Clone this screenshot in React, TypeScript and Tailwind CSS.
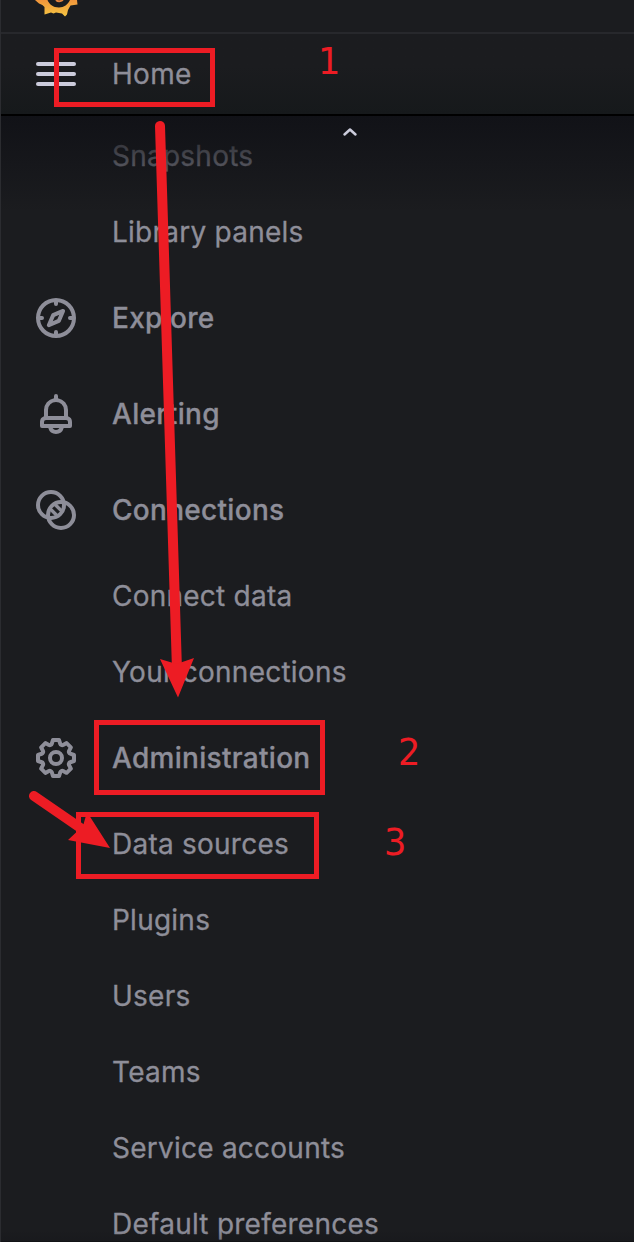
import type { ReactNode } from "react";

const compass =
  "M12,2A10,10,0,1,0,22,12,10,10,0,0,0,12,2Zm1,17.93V19a1,1,0,0,0-2,0v.93A8,8,0,0,1,4.07,13H5a1,1,0,0,0,0-2H4.07A8,8,0,0,1,11,4.07V5a1,1,0,0,0,2,0V4.07A8,8,0,0,1,19.93,11H19a1,1,0,0,0,0,2h.93A8,8,0,0,1,13,19.93ZM15.14,7.55l-5,2.12a1,1,0,0,0-.52.52l-2.12,5a1,1,0,0,0,.21,1.1,1,1,0,0,0,.7.29.93.93,0,0,0,.4-.08l5-2.12a1,1,0,0,0,.52-.52l2.12-5a1,1,0,0,0-1.31-1.31Zm-2.49,5.1-2.28,1,1-2.28,2.28-1Z";
const bell =
  "M18,13.18V10a6,6,0,0,0-5-5.91V3a1,1,0,0,0-2,0V4.09A6,6,0,0,0,6,10v3.18A3,3,0,0,0,4,16v2a1,1,0,0,0,1,1H8.14a4,4,0,0,0,7.72,0H19a1,1,0,0,0,1-1V16A3,3,0,0,0,18,13.18ZM8,10a4,4,0,0,1,8,0v3H8Zm4,10a2,2,0,0,1-1.72-1h3.44A2,2,0,0,1,12,20Zm6-3H6V16a1,1,0,0,1,1-1H17a1,1,0,0,1,1,1Z";
const cog =
  "M21.32,9.55l-1.89-.63.89-1.78A1,1,0,0,0,20.13,6L18,3.87a1,1,0,0,0-1.15-.19l-1.78.89-.63-1.89A1,1,0,0,0,13.5,2h-3a1,1,0,0,0-.95.68L8.92,4.57,7.14,3.68A1,1,0,0,0,6,3.87L3.87,6a1,1,0,0,0-.19,1.15l.89,1.78-1.89.63A1,1,0,0,0,2,10.5v3a1,1,0,0,0,.68.95l1.89.63-.89,1.78A1,1,0,0,0,3.87,18L6,20.13a1,1,0,0,0,1.15.19l1.78-.89.63,1.89a1,1,0,0,0,.95.68h3a1,1,0,0,0,.95-.68l.63-1.89,1.78.89A1,1,0,0,0,18,20.13L20.13,18a1,1,0,0,0,.19-1.15l-.89-1.78,1.89-.63A1,1,0,0,0,22,13.5v-3A1,1,0,0,0,21.32,9.55ZM20,12.78l-1.2.4A2,2,0,0,0,17.64,16l.57,1.14-1.1,1.1L16,17.64a2,2,0,0,0-2.79,1.16l-.4,1.2H11.22l-.4-1.2A2,2,0,0,0,8,17.64l-1.14.57-1.1-1.1L6.36,16A2,2,0,0,0,5.2,13.18L4,12.78V11.22l1.2-.4A2,2,0,0,0,6.36,8L5.79,6.89l1.1-1.1L8,6.36A2,2,0,0,0,10.82,5.2l.4-1.2h1.56l.4,1.2A2,2,0,0,0,16,6.36l1.14-.57,1.1,1.1L17.64,8a2,2,0,0,0,1.16,2.79l1.2.4ZM12,8a4,4,0,1,0,4,4A4,4,0,0,0,12,8Zm0,6a2,2,0,1,1,2-2A2,2,0,0,1,12,14Z";

function Glyph({ d }: { d: string }) {
  return (
    <svg viewBox="0 0 24 24" className="size-12 fill-current">
      <path d={d} />
    </svg>
  );
}

function ConnectionsIcon() {
  return (
    <svg viewBox="0 0 24 24" className="size-12" fill="none" stroke="currentColor" strokeWidth="2">
      <circle cx="9.5" cy="9.5" r="6.500" />
      <circle cx="14.5" cy="14.5" r="6.500" />
      <path d="M11.300 9l3.700 3.700M9 11.300l3.700 3.700" strokeWidth="1.700" />
    </svg>
  );
}

function Section({ icon, label }: { icon: ReactNode; label: string }) {
  return (
    <li className="flex h-24 items-center pl-8">
      <span className="mr-8 size-12">{icon}</span>
      <span className="font-medium">{label}</span>
    </li>
  );
}

function Item({ label }: { label: string }) {
  return <li className="flex h-19 items-center pl-28 tracking-[0.24px]">{label}</li>;
}

function Logo() {
  return (
    <svg width="46" height="18" viewBox="0 0 46 18" className="ml-8">
      <defs>
        <linearGradient id="sun" x1="0" y1="-14" x2="0" y2="17" gradientUnits="userSpaceOnUse">
          <stop offset="0" stopColor="#ee6a35" />
          <stop offset="1" stopColor="#f5c843" />
        </linearGradient>
      </defs>
      <path
        fill="url(#sun)"
        d="M3 0L7 3.500Q11 4.500 12.500 7L12.500 14.500L19 12.500L21.500 13.500L24 12.500L30 13.500L33 16.500L35 14.500L36 10L38.500 5.500L45.500 4.500L45 0H38C36 4.500 32 7.500 27 7.500C21 7.500 17 4 15.500 0Z"
      />
      <path d="M24 0Q27 2.500 31 0" fill="none" stroke="#e6823c" strokeWidth="2" />
    </svg>
  );
}

export default function App() {
  return (
    <div className="relative flex h-[1242px] w-[634px] flex-col overflow-hidden border-l border-[#2b2c30] bg-[#1b1c1f] font-['Inter',sans-serif] text-[28px] leading-none tracking-[0.3px] text-[#8e8e99] [-webkit-text-stroke:0.3px_currentColor]">
      <header className="-ml-px flex h-[116px] shrink-0 flex-col border-b-2 border-black">
        <div className="h-[34px] shrink-0 border-b-2 border-[#27282c]">
          <Logo />
        </div>
        <div className="flex flex-1 items-center bg-linear-to-b from-[#1b1c1f] from-40% to-[#16191b] pl-9">
          <span className="mr-9 flex w-10 flex-col gap-1.5">
            <span className="h-1 rounded-full bg-[#ccccdc]" />
            <span className="h-1 rounded-full bg-[#ccccdc]" />
            <span className="h-1 rounded-full bg-[#ccccdc]" />
          </span>
          <span>Home</span>
        </div>
      </header>
      <nav className="relative -ml-px flex-1 overflow-hidden">
        <ul className="pt-[2px]">
          <Item label="Snapshots" />
          <Item label="Library panels" />
          <Section icon={<Glyph d={compass} />} label="Explore" />
          <Section icon={<Glyph d={bell} />} label="Alerting" />
          <Section icon={<ConnectionsIcon />} label="Connections" />
          <Item label="Connect data" />
          <Item label="Your connections" />
          <Section icon={<Glyph d={cog} />} label="Administration" />
          <Item label="Data sources" />
          <Item label="Plugins" />
          <Item label="Users" />
          <Item label="Teams" />
          <Item label="Service accounts" />
          <Item label="Default preferences" />
        </ul>
        <div className="absolute inset-x-0 top-0 flex h-24 justify-center bg-linear-to-b from-[#111217] to-[#111217]/0">
          <svg width="16" height="10" viewBox="0 0 16 10" className="mt-[11px] ml-[65px]">
            <path d="M2.500 7.500L8 2.500L13.500 7.500" fill="none" stroke="#ccccdc" strokeWidth="2.500" strokeLinecap="round" strokeLinejoin="round" />
          </svg>
        </div>
        <div className="absolute inset-x-0 bottom-0 h-3 border-b border-[#121316] bg-linear-to-t from-[#111217]/25 to-[#111217]/0" />
      </nav>

      <div className="absolute top-[48px] left-[53px] h-[59px] w-[161px] border-5 border-[#ed1c24]" />
      <div className="absolute top-[720px] left-[93px] h-[75px] w-[231px] border-5 border-[#ed1c24]" />
      <div className="absolute top-[812px] left-[75px] h-[67px] w-[243px] border-5 border-[#ed1c24]" />
      <svg width="634" height="1242" viewBox="0 0 634 1242" className="absolute top-0 -left-px" fill="#ed1c24">
        <path d="M160 126L177 670M34 796L82 829" stroke="#ed1c24" strokeWidth="10" strokeLinecap="round" />
        <path d="M160 659L176.500 664L194 658L178 697.500Z" />
        <path d="M110 848L87 812L83 826L68 840Z" />
      </svg>
      <span className="absolute top-[43px] left-[317px] origin-left scale-x-95 font-['DejaVu_Sans',sans-serif] text-[37px] tracking-normal text-[#ed1c24] [-webkit-text-stroke:0px]">1</span>
      <span className="absolute top-[734px] left-[397px] origin-left scale-x-95 font-['DejaVu_Sans',sans-serif] text-[37px] tracking-normal text-[#ed1c24] [-webkit-text-stroke:0px]">2</span>
      <span className="absolute top-[824px] left-[383px] origin-left scale-x-95 font-['DejaVu_Sans',sans-serif] text-[37px] tracking-normal text-[#ed1c24] [-webkit-text-stroke:0px]">3</span>
    </div>
  );
}
